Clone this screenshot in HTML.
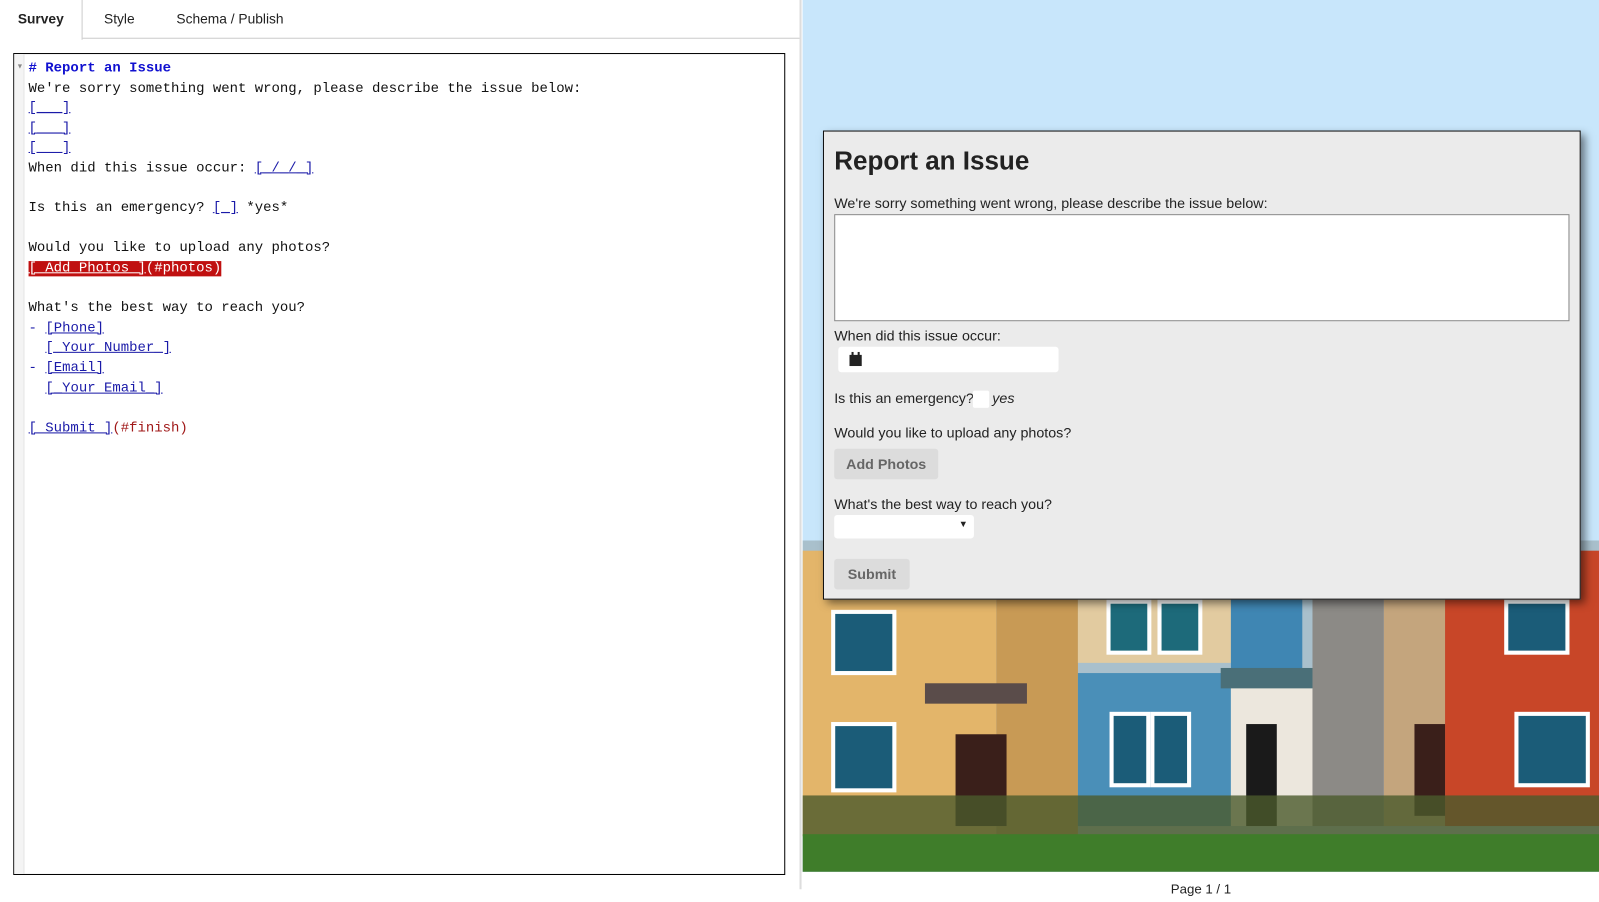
<!DOCTYPE html>
<html><head><meta charset="utf-8"><style>
*{box-sizing:border-box;margin:0;padding:0}
html,body{width:1599px;height:901px;overflow:hidden;background:#fff}
#w{position:absolute;left:0;top:0;width:1568px;height:884px;transform:scale(1.0198);transform-origin:0 0;font-family:"Liberation Sans",sans-serif}
.tabs{position:absolute;left:0;top:0;width:784px;height:38px;border-bottom:1px solid #ccc}
.tab{position:absolute;top:0;height:38px;line-height:38px;font-size:13.5px;color:#222}
.tab.act{left:0;width:81px;border-right:1px solid #ccc;background:#fff;height:39px;font-weight:bold;text-align:center}
.leftborder{position:absolute;left:784px;top:0;width:2px;height:872px;background:#ddd}
.ed{position:absolute;left:13px;top:52px;width:757px;height:806px;border:1px solid #000;background:#fff}
.gut{position:absolute;left:0;top:0;width:10px;height:100%;background:#f4f4f4;border-right:1px solid #e5e5e5}
.code{position:absolute;left:14px;top:5px;font-family:"Liberation Mono",monospace;font-size:13.7px;line-height:19.6px;white-space:pre;color:#111}
.h{color:#1010d0;font-weight:bold}
.l{color:#1a1aa8;text-decoration:underline}
.r{color:#a01818}
.sel{background:#c01010;color:#fff}
.tri{position:absolute;left:2px;top:9px;font-size:7px;color:#888}
.right{position:absolute;left:787px;top:0;width:781px;height:855px;background:#c8e6fb;overflow:hidden}
.panel{position:absolute;left:807px;top:128px;width:743px;height:460px;background:#ebebeb;border:1.5px solid #111;box-shadow:4px 4px 8px rgba(0,0,0,.5);font-size:14px;color:#222}
.panel h1{position:absolute;left:10px;top:15px;font-size:25.5px;font-weight:bold;color:#222}
.lbl{position:absolute;left:10px;white-space:nowrap}
.ta{position:absolute;left:10px;top:81px;width:721px;height:105px;background:#fff;border:1px solid #888}
.date{position:absolute;left:14px;top:211px;width:216px;height:25px;background:#fff;border-radius:3px}
.cb{position:absolute;left:146px;top:254px;width:16px;height:17px;background:#fff;border-radius:2px}
.btn{position:absolute;left:10px;background:#dcdcdc;border-radius:3px;color:#666;font-weight:bold;text-align:center;font-size:14px}
.sel2{position:absolute;left:10px;top:376px;width:137px;height:23px;background:#fff;border-radius:3px}
.pg{position:absolute;left:1148px;top:864px;font-size:13px;color:#222}
</style></head><body><div id="w">
<div class="tabs">
<div class="tab act">Survey</div>
<div class="tab" style="left:102px">Style</div>
<div class="tab" style="left:173px">Schema / Publish</div>
</div>
<div class="leftborder"></div>
<div class="ed"><div class="gut"></div><div class="tri">▼</div>
<div class="code"><span class="h"># Report an Issue</span>
We're sorry something went wrong, please describe the issue below:
<span class="l">[___]</span>
<span class="l">[___]</span>
<span class="l">[___]</span>
When did this issue occur: <span class="l">[_/_/_]</span>

Is this an emergency? <span class="l">[_]</span> *yes*

Would you like to upload any photos?
<span class="sel"><u>[ Add Photos ]</u>(#photos)</span>

What's the best way to reach you?
<span class="l" style="text-decoration:none">- </span><span class="l">[Phone]</span>
  <span class="l">[_Your Number_]</span>
<span class="l" style="text-decoration:none">- </span><span class="l">[Email]</span>
  <span class="l">[_Your Email_]</span>

<span class="l">[ Submit ]</span><span class="r">(#finish)</span></div>
</div>
<div class="right">
<svg width="781" height="855" style="position:absolute;left:0;top:0">
<rect x="0" y="530" width="781" height="325" fill="#a9c0cc"/>
<rect x="0" y="540" width="190" height="280" fill="#e3b56a"/>
<rect x="190" y="560" width="80" height="260" fill="#c89a55"/>
<rect x="30" y="600" width="60" height="60" fill="#1b5c78" stroke="#fff" stroke-width="4"/>
<rect x="30" y="710" width="60" height="65" fill="#1b5c78" stroke="#fff" stroke-width="4"/>
<rect x="150" y="720" width="50" height="90" fill="#3a1f1a"/>
<rect x="120" y="670" width="100" height="20" fill="#5a4c4a"/>
<rect x="270" y="540" width="150" height="110" fill="#e2cba0"/>
<rect x="300" y="590" width="40" height="50" fill="#1d6a7a" stroke="#fff" stroke-width="4"/>
<rect x="350" y="590" width="40" height="50" fill="#1d6a7a" stroke="#fff" stroke-width="4"/>
<rect x="270" y="660" width="150" height="150" fill="#4a8fb8"/>
<rect x="303" y="700" width="36" height="70" fill="#1b5c78" stroke="#fff" stroke-width="4"/>
<rect x="343" y="700" width="36" height="70" fill="#1b5c78" stroke="#fff" stroke-width="4"/>
<rect x="420" y="540" width="70" height="120" fill="#3f86b3"/>
<rect x="420" y="660" width="85" height="150" fill="#ece7dd"/>
<rect x="435" y="710" width="30" height="100" fill="#1a1a1a"/>
<rect x="410" y="655" width="100" height="20" fill="#4a6f78"/>
<rect x="500" y="560" width="70" height="250" fill="#8c8a86"/>
<rect x="570" y="540" width="60" height="270" fill="#c4a57d"/>
<rect x="630" y="540" width="151" height="270" fill="#c84628"/>
<rect x="690" y="590" width="60" height="50" fill="#1b5c78" stroke="#fff" stroke-width="4"/>
<rect x="600" y="710" width="30" height="90" fill="#3a1f1a"/>
<rect x="700" y="700" width="70" height="70" fill="#1b5c78" stroke="#fff" stroke-width="4"/>
<rect x="0" y="780" width="781" height="40" fill="#4b5a2c" opacity=".8"/>
<rect x="0" y="818" width="781" height="37" fill="#3f7d2a"/>
</svg>
</div>
<div class="panel">
<h1>Report an Issue</h1>
<div class="lbl" style="top:62px">We're sorry something went wrong, please describe the issue below:</div>
<div class="ta"></div>
<div class="lbl" style="top:192px">When did this issue occur:</div>
<div class="date"><svg width="14" height="14" style="position:absolute;left:10px;top:5px"><rect x="1" y="3" width="12" height="11" fill="#222"/><rect x="3" y="0" width="2" height="4" fill="#222"/><rect x="9" y="0" width="2" height="4" fill="#222"/></svg></div>
<div class="lbl" style="top:253px">Is this an emergency?</div>
<div class="cb"></div>
<div class="lbl" style="left:165px;top:253px;font-style:italic">yes</div>
<div class="lbl" style="top:287px">Would you like to upload any photos?</div>
<div class="btn" style="top:311px;width:102px;height:30px;line-height:30px">Add Photos</div>
<div class="lbl" style="top:357px">What's the best way to reach you?</div>
<div class="sel2"><span style="position:absolute;right:6px;top:4px;font-size:9px">▼</span></div>
<div class="btn" style="top:419px;width:74px;height:30px;line-height:30px">Submit</div>
</div>
<div class="pg">Page 1 / 1</div>
</div></body></html>
